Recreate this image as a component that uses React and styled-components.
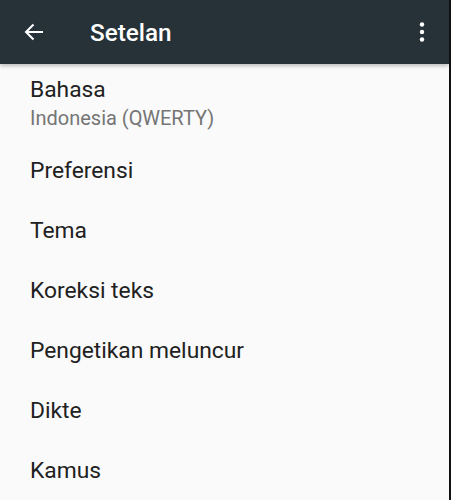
import styled, { createGlobalStyle } from "styled-components";

const GlobalStyle = createGlobalStyle`
  html, body {
    margin: 0;
    padding: 0;
    background: #fafafa;
  }
  body {
    font-family: Roboto, "Noto Sans", sans-serif;
  }
`;

const Tela = styled.div`
  width: 451px;
  height: 500px;
  background: #fafafa;
  border-right: 2px solid #111;
  box-sizing: border-box;
  overflow: hidden;
`;

const Barra = styled.header`
  height: 64px;
  background: #263238;
  display: flex;
  align-items: center;
  padding: 0 24px 0 24px;
  box-shadow: 0 2px 4px rgba(0, 0, 0, 0.25);
  position: relative;
  z-index: 1;
`;

const Titulo = styled.h1`
  flex: 1;
  margin: 0 0 0 46px;
  color: #fff;
  font-size: 24.3px;
  font-weight: 500;
`;

const BotaoIcone = styled.div`
  display: flex;
  align-items: center;
  justify-content: center;
  color: #fff;
`;

const Lista = styled.ul`
  list-style: none;
  margin: 0;
  padding: 2px 0 0;
`;

const Item = styled.li`
  height: ${(p) => (p.$duplo ? "75px" : "60px")};
  padding: 0 30px;
  display: flex;
  flex-direction: column;
  justify-content: center;
`;

const Rotulo = styled.span`
  font-size: 22.8px;
  color: #212121;
  line-height: 28px;
`;

const Resumo = styled.span`
  font-size: 20px;
  color: #757575;
  line-height: 28px;
`;

const Voltar = () => (
  <svg width="20" height="20" viewBox="0 0 20 20" fill="none">
    <path d="M19 10H2M9.5 2.5L2 10l7.5 7.5" stroke="#fff" strokeWidth="2" />
  </svg>
);

const Mais = () => (
  <svg width="6" height="22" viewBox="0 0 6 22">
    <circle cx="3" cy="3.5" r="2.2" fill="#fff" />
    <circle cx="3" cy="11" r="2.2" fill="#fff" />
    <circle cx="3" cy="18.5" r="2.2" fill="#fff" />
  </svg>
);

const itens = [
  { titulo: "Bahasa", resumo: "Indonesia (QWERTY)" },
  { titulo: "Preferensi" },
  { titulo: "Tema" },
  { titulo: "Koreksi teks" },
  { titulo: "Pengetikan meluncur" },
  { titulo: "Dikte" },
  { titulo: "Kamus" },
];

const App = () => {
  return (
    <>
      <GlobalStyle />
      <Tela>
        <Barra>
          <BotaoIcone>
            <Voltar />
          </BotaoIcone>
          <Titulo>Setelan</Titulo>
          <BotaoIcone>
            <Mais />
          </BotaoIcone>
        </Barra>
        <Lista>
          {itens.map((item, index) => (
            <Item key={index} $duplo={!!item.resumo}>
              <Rotulo>{item.titulo}</Rotulo>
              {item.resumo && <Resumo>{item.resumo}</Resumo>}
            </Item>
          ))}
        </Lista>
      </Tela>
    </>
  );
};

export default App;
